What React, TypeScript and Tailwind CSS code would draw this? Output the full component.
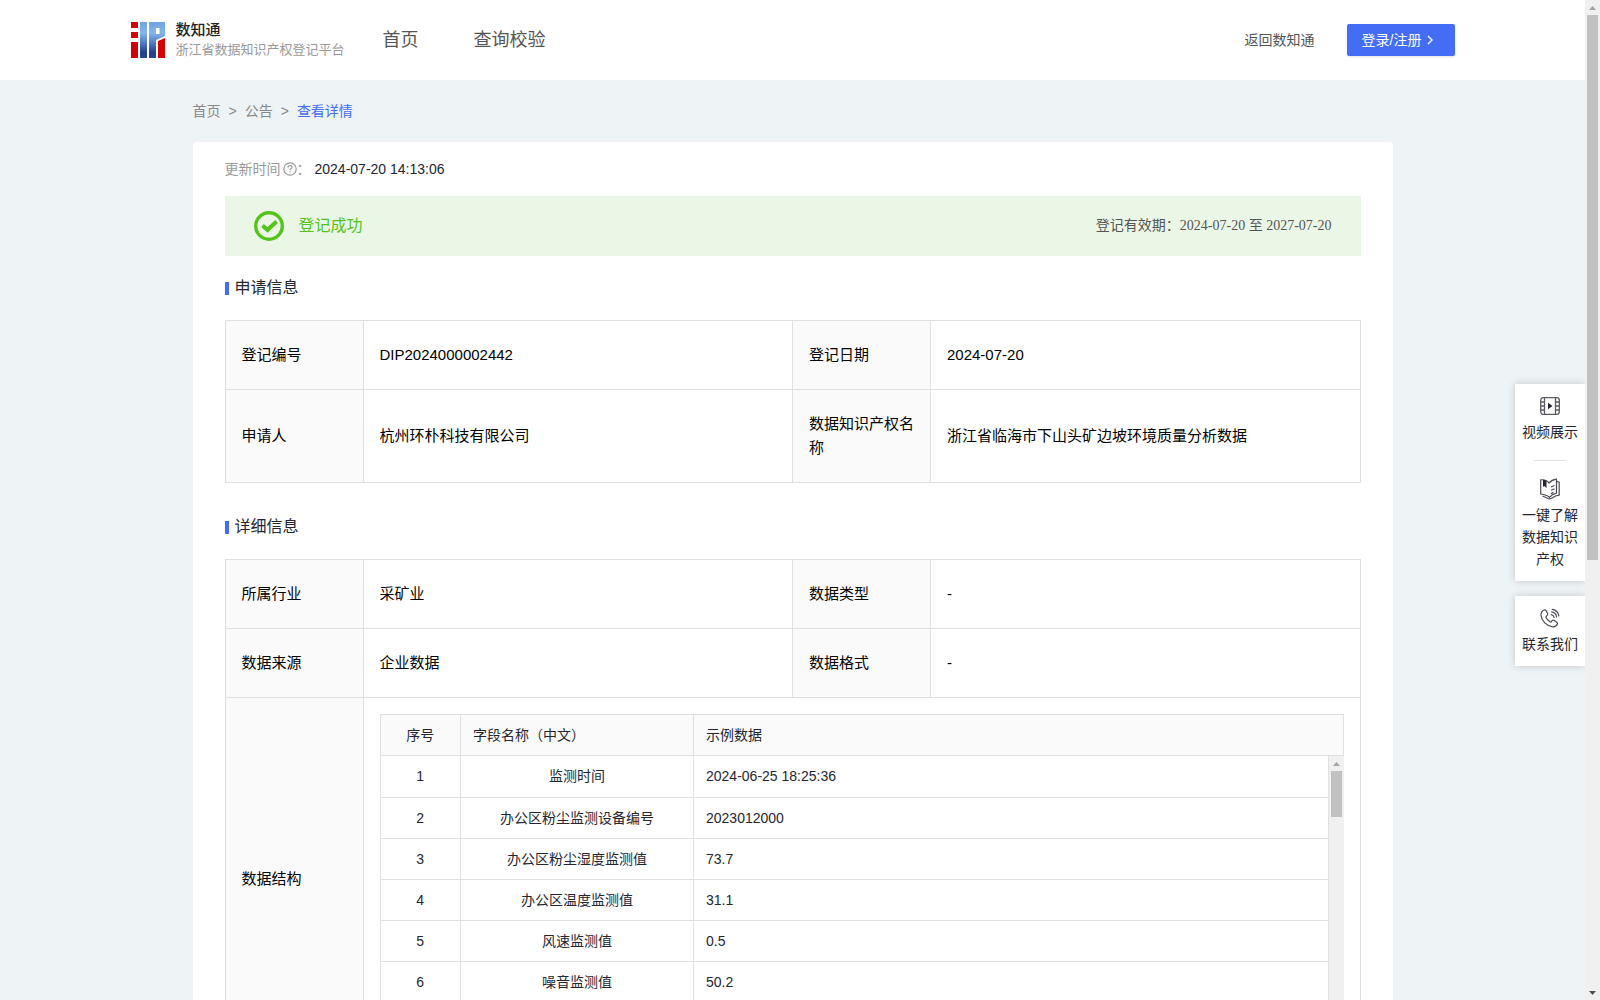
import type { ReactNode } from "react";

interface Pair {
  label: string;
  value: string;
}

const applyRows: Pair[][] = [
  [
    { label: "登记编号", value: "DIP2024000002442" },
    { label: "登记日期", value: "2024-07-20" },
  ],
  [
    { label: "申请人", value: "杭州环朴科技有限公司" },
    { label: "数据知识产权名称", value: "浙江省临海市下山头矿边坡环境质量分析数据" },
  ],
];

const detailRows: Pair[][] = [
  [
    { label: "所属行业", value: "采矿业" },
    { label: "数据类型", value: "-" },
  ],
  [
    { label: "数据来源", value: "企业数据" },
    { label: "数据格式", value: "-" },
  ],
];

const fields = [
  { name: "监测时间", sample: "2024-06-25 18:25:36" },
  { name: "办公区粉尘监测设备编号", sample: "2023012000" },
  { name: "办公区粉尘湿度监测值", sample: "73.7" },
  { name: "办公区温度监测值", sample: "31.1" },
  { name: "风速监测值", sample: "0.5" },
  { name: "噪音监测值", sample: "50.2" },
];

function Logo() {
  return (
    <svg width="34" height="36" viewBox="0 0 34 36" aria-hidden="true">
      <defs>
        <linearGradient id="logoBlue" x1="0" y1="0" x2="0" y2="36" gradientUnits="userSpaceOnUse">
          <stop offset="0" stopColor="#6fa3e0" />
          <stop offset="0.3" stopColor="#85b4ea" />
          <stop offset="0.6" stopColor="#4c78bf" />
          <stop offset="0.85" stopColor="#243f8a" />
          <stop offset="1" stopColor="#2a4690" />
        </linearGradient>
      </defs>
      <path d="M0 0h7v6H0zM0 10h7v6H0zM0 20h7v16H0zM27 19l7-3v20h-7z" fill="#d2040a" />
      <path d="M9 0h7v36H9z" fill="url(#logoBlue)" />
      <path d="M18 0h16v14l-9 4v18h-7zM25 6v6h3.500V6z" fill="url(#logoBlue)" fillRule="evenodd" />
    </svg>
  );
}

function Header() {
  return (
    <header className="h-20 bg-white px-8">
      <div className="mx-auto flex h-full max-w-[1324px] items-center">
        <a href="#" className="flex items-center gap-[11px]">
          <Logo />
          <span className="flex flex-col">
            <span className="text-[15px] leading-5 font-medium text-[#222]">数知通</span>
            <span className="text-[13px] leading-5 text-[#999]">浙江省数据知识产权登记平台</span>
          </span>
        </a>
        <nav className="ml-[38px] flex gap-[55px] text-lg text-[#555]">
          <a href="#">首页</a>
          <a href="#">查询校验</a>
        </nav>
        <a href="#" className="ml-auto text-sm text-[#555]">返回数知通</a>
        <button className="ml-8 flex h-8 w-[108px] items-center gap-1 rounded-xs bg-[#446df6] pl-[15px] text-sm text-white shadow-sm">
          登录/注册
          <svg width="10" height="10" viewBox="0 0 10 10" fill="none" stroke="currentColor" strokeWidth="1.4">
            <path d="M3 1l4 4-4 4" />
          </svg>
        </button>
      </div>
    </header>
  );
}

function SectionTitle({ children }: { children: ReactNode }) {
  return (
    <h2 className="flex items-center gap-[6px] text-base leading-6 text-[#252632]">
      <span className="mt-px h-[13px] w-1 bg-[#446df6]" />
      {children}
    </h2>
  );
}

function InfoRows({ rows }: { rows: Pair[][] }) {
  return (
    <>
      {rows.map((row) => (
        <tr key={row[0].label}>
          {row.map((cell) => [
            <th key={cell.label} scope="row" className="border border-[#e0e0e0] bg-[#fafafa] px-4 py-[22px] text-left font-normal">
              {cell.label}
            </th>,
            <td key={cell.label + "-value"} className="border border-[#e0e0e0] px-4 py-[22px]">
              {cell.value}
            </td>,
          ])}
        </tr>
      ))}
    </>
  );
}

function InfoTable({ children }: { children: ReactNode }) {
  return (
    <table className="w-full table-fixed border-collapse text-[15px] leading-6 text-black">
      <colgroup>
        <col className="w-[138px]" />
        <col />
        <col className="w-[138px]" />
        <col />
      </colgroup>
      <tbody>{children}</tbody>
    </table>
  );
}

function ScrollArrow({ down = false }: { down?: boolean }) {
  return (
    <svg width="15" height="15" viewBox="0 0 15 15" className="shrink-0" aria-hidden="true">
      <path d={down ? "M4 6h7L7.500 10z" : "M4 10h7L7.500 6z"} fill={down ? "#505050" : "#a3a3a3"} />
    </svg>
  );
}

function FieldTable() {
  return (
    <div className="border-t border-l border-[#e0e0e0] text-sm text-[#252632]">
      <div className="border-r border-b border-[#e0e0e0] bg-[#fafafa]">
        <table className="w-full table-fixed border-collapse">
          <colgroup>
            <col className="w-20" />
            <col className="w-[233px]" />
            <col />
          </colgroup>
          <thead>
            <tr className="h-10 text-left">
              <th className="border-r border-[#e0e0e0] text-center font-normal">序号</th>
              <th className="border-r border-[#e0e0e0] px-3 font-normal">字段名称（中文）</th>
              <th className="px-3 font-normal">示例数据</th>
            </tr>
          </thead>
        </table>
      </div>
      <div className="flex h-[287px] overflow-hidden">
        <div className="flex-1 border-r border-[#e0e0e0]">
          <table className="w-full table-fixed border-collapse">
            <colgroup>
              <col className="w-20" />
              <col className="w-[233px]" />
              <col />
            </colgroup>
            <tbody>
              {fields.map((field, i) => (
                <tr key={field.name} className="h-[41px] border-b border-[#e0e0e0]">
                  <td className="border-r border-[#e0e0e0] text-center">{i + 1}</td>
                  <td className="border-r border-[#e0e0e0] px-3 text-center">{field.name}</td>
                  <td className="px-3">{field.sample}</td>
                </tr>
              ))}
            </tbody>
          </table>
        </div>
        <div className="flex w-[15px] flex-col items-center bg-[#f0f0f0]">
          <ScrollArrow />
          <div className="h-[46px] w-[11px] bg-[#c1c1c1]" />
        </div>
      </div>
    </div>
  );
}

function SideBar() {
  return (
    <aside className="absolute top-96 right-0 flex w-[70px] flex-col gap-[15px] text-center text-sm leading-[22px] text-[#252632]">
      <div className="flex flex-col items-center bg-white px-[7px] pt-3 pb-[11px] shadow-[0_0_8px_rgba(0,0,0,0.18)]">
        <a href="#" className="flex flex-col items-center">
          <svg width="20" height="20" viewBox="0 0 20 20" fill="none" stroke="#5a5b64" strokeWidth="1.3" className="mb-[5px]">
            <rect x="0.700" y="1.700" width="18.600" height="16.600" rx="2.500" />
            <path d="M4.500 1.700v16.600M15.500 1.700v16.600M0.700 6h3.800M0.700 10h3.800M0.700 14h3.800M15.500 6h3.800M15.500 10h3.800M15.500 14h3.800" />
            <path d="M8 6.800l4.500 3.200L8 13.200z" fill="#252632" stroke="none" />
          </svg>
          视频展示
        </a>
        <div className="my-[17px] h-px w-8 bg-[#e0e0e0]" />
        <a href="#" className="flex flex-col items-center">
          <svg width="20" height="22" viewBox="0 0 20 22" fill="none" stroke="#4a4b55" strokeWidth="1.200" strokeLinejoin="round" className="mb-1">
            <path d="M0.700 1.800C4 1.500 7.500 2.500 9 5c1.800-2.200 4.300-3.500 7.500-3.900v14c-3.300.8-5.300 2-7 4.200-2-1.800-5-2.800-8.800-3.300z" />
            <path d="M16.600 3.500l2.600.6v13c-2.700.3-4.700 1-6.700 2.700-1.700 1.200-3.300 1.300-5 .4L2.500 18" />
            <path d="M11 9l3.500-1.500M11 12.300l3.500-1.500M11 15.600l2.500-1.200" />
            <path d="M3 1.800l3.500.7v7.700L4.800 8.300 3 8.800z" fill="#252632" stroke="none" />
          </svg>
          一键了解数据知识产权
        </a>
      </div>
      <a href="#" className="flex flex-col items-center bg-white pt-3 pb-[11px] shadow-[0_0_8px_rgba(0,0,0,0.18)]">
        <svg width="20" height="20" viewBox="0 0 20 20" fill="none" stroke="#4a4b55" strokeWidth="1.200" strokeLinecap="round" className="mb-[5px]">
          <path d="M4.200 2C2 3 .8 4.800 1 7.300c.5 5.700 5.700 10.700 11.500 11.500 2.300.3 4.100-.8 4.900-3 .2-.7 0-1.200-.6-1.600l-2.900-1.900c-.7-.4-1.300-.3-1.800.3l-.8 1c-.4.500-.9.500-1.400.2C8 12.600 6.900 11.300 6.100 9.600c-.3-.5-.2-1 .2-1.400l.9-.8c.6-.5.7-1.100.4-1.800L6.200 2.700C5.700 2 5 1.700 4.200 2z" />
          <path d="M11.300 6.600c1.600.3 2.600 1.300 2.800 2.900M11.700 3.900c2.800.5 4.500 2.200 4.900 4.900M12.200 1.400c3.700.6 6.100 2.900 6.700 6.500" />
        </svg>
        联系我们
      </a>
    </aside>
  );
}

export default function App() {
  return (
    <div className="flex h-screen overflow-hidden bg-[#eef3f6] font-['Liberation_Sans','Noto_Sans_CJK_SC',sans-serif]">
      <div className="relative flex-1 overflow-hidden">
        <Header />
        <main className="mx-auto max-w-[1200px]">
          <nav aria-label="面包屑" className="flex h-[62px] items-center gap-2 text-sm text-[#888]">
            <a href="#">首页</a>
            <span>&gt;</span>
            <a href="#">公告</a>
            <span>&gt;</span>
            <a href="#" className="text-[#446df6]">查看详情</a>
          </nav>
          <div className="rounded bg-white px-8 pb-8">
            <div className="flex h-[54px] items-center text-sm text-[#999]">
              更新时间
              <svg width="14" height="14" viewBox="0 0 14 14" fill="none" stroke="currentColor" strokeWidth="1.200" className="ml-[2px]">
                <circle cx="7" cy="7" r="6.200" />
                <path d="M5 5.600C5 4.300 5.900 3.600 7 3.600s2 .7 2 1.700C9 6.600 7 6.700 7 8.300M7 9.300v1.300" />
              </svg>
              ：
              <span className="ml-1 text-[#252632]">2024-07-20 14:13:06</span>
            </div>
            <div className="flex h-[60px] items-center bg-[#ebf7e6] px-[29px]">
              <svg width="30" height="30" viewBox="0 0 30 30" fill="none" stroke="#52c41a">
                <circle cx="15" cy="15" r="13.300" strokeWidth="3.400" />
                <path d="M8.500 14.500l5 4.500 9-8.500" strokeWidth="4" />
              </svg>
              <span className="ml-[15px] text-base text-[#52c41a]">登记成功</span>
              <span className="ml-auto font-['Liberation_Serif','Noto_Sans_CJK_SC',serif] text-sm text-[#555]">
                登记有效期：2024-07-20 至 2027-07-20
              </span>
            </div>
            <div className="pt-5 pb-5">
              <SectionTitle>申请信息</SectionTitle>
            </div>
            <InfoTable>
              <InfoRows rows={applyRows} />
            </InfoTable>
            <div className="pt-8 pb-5">
              <SectionTitle>详细信息</SectionTitle>
            </div>
            <InfoTable>
              <InfoRows rows={detailRows} />
              <tr>
                <th scope="row" className="border border-[#e0e0e0] bg-[#fafafa] px-4 text-left font-normal">
                  数据结构
                </th>
                <td colSpan={3} className="border border-[#e0e0e0] p-4">
                  <FieldTable />
                </td>
              </tr>
            </InfoTable>
          </div>
        </main>
        <SideBar />
      </div>
      <div className="flex w-[15px] flex-col items-center bg-[#f0f0f0]">
        <ScrollArrow />
        <div className="h-[545px] w-[11px] bg-[#c1c1c1]" />
        <div className="mt-auto">
          <ScrollArrow down />
        </div>
      </div>
    </div>
  );
}
